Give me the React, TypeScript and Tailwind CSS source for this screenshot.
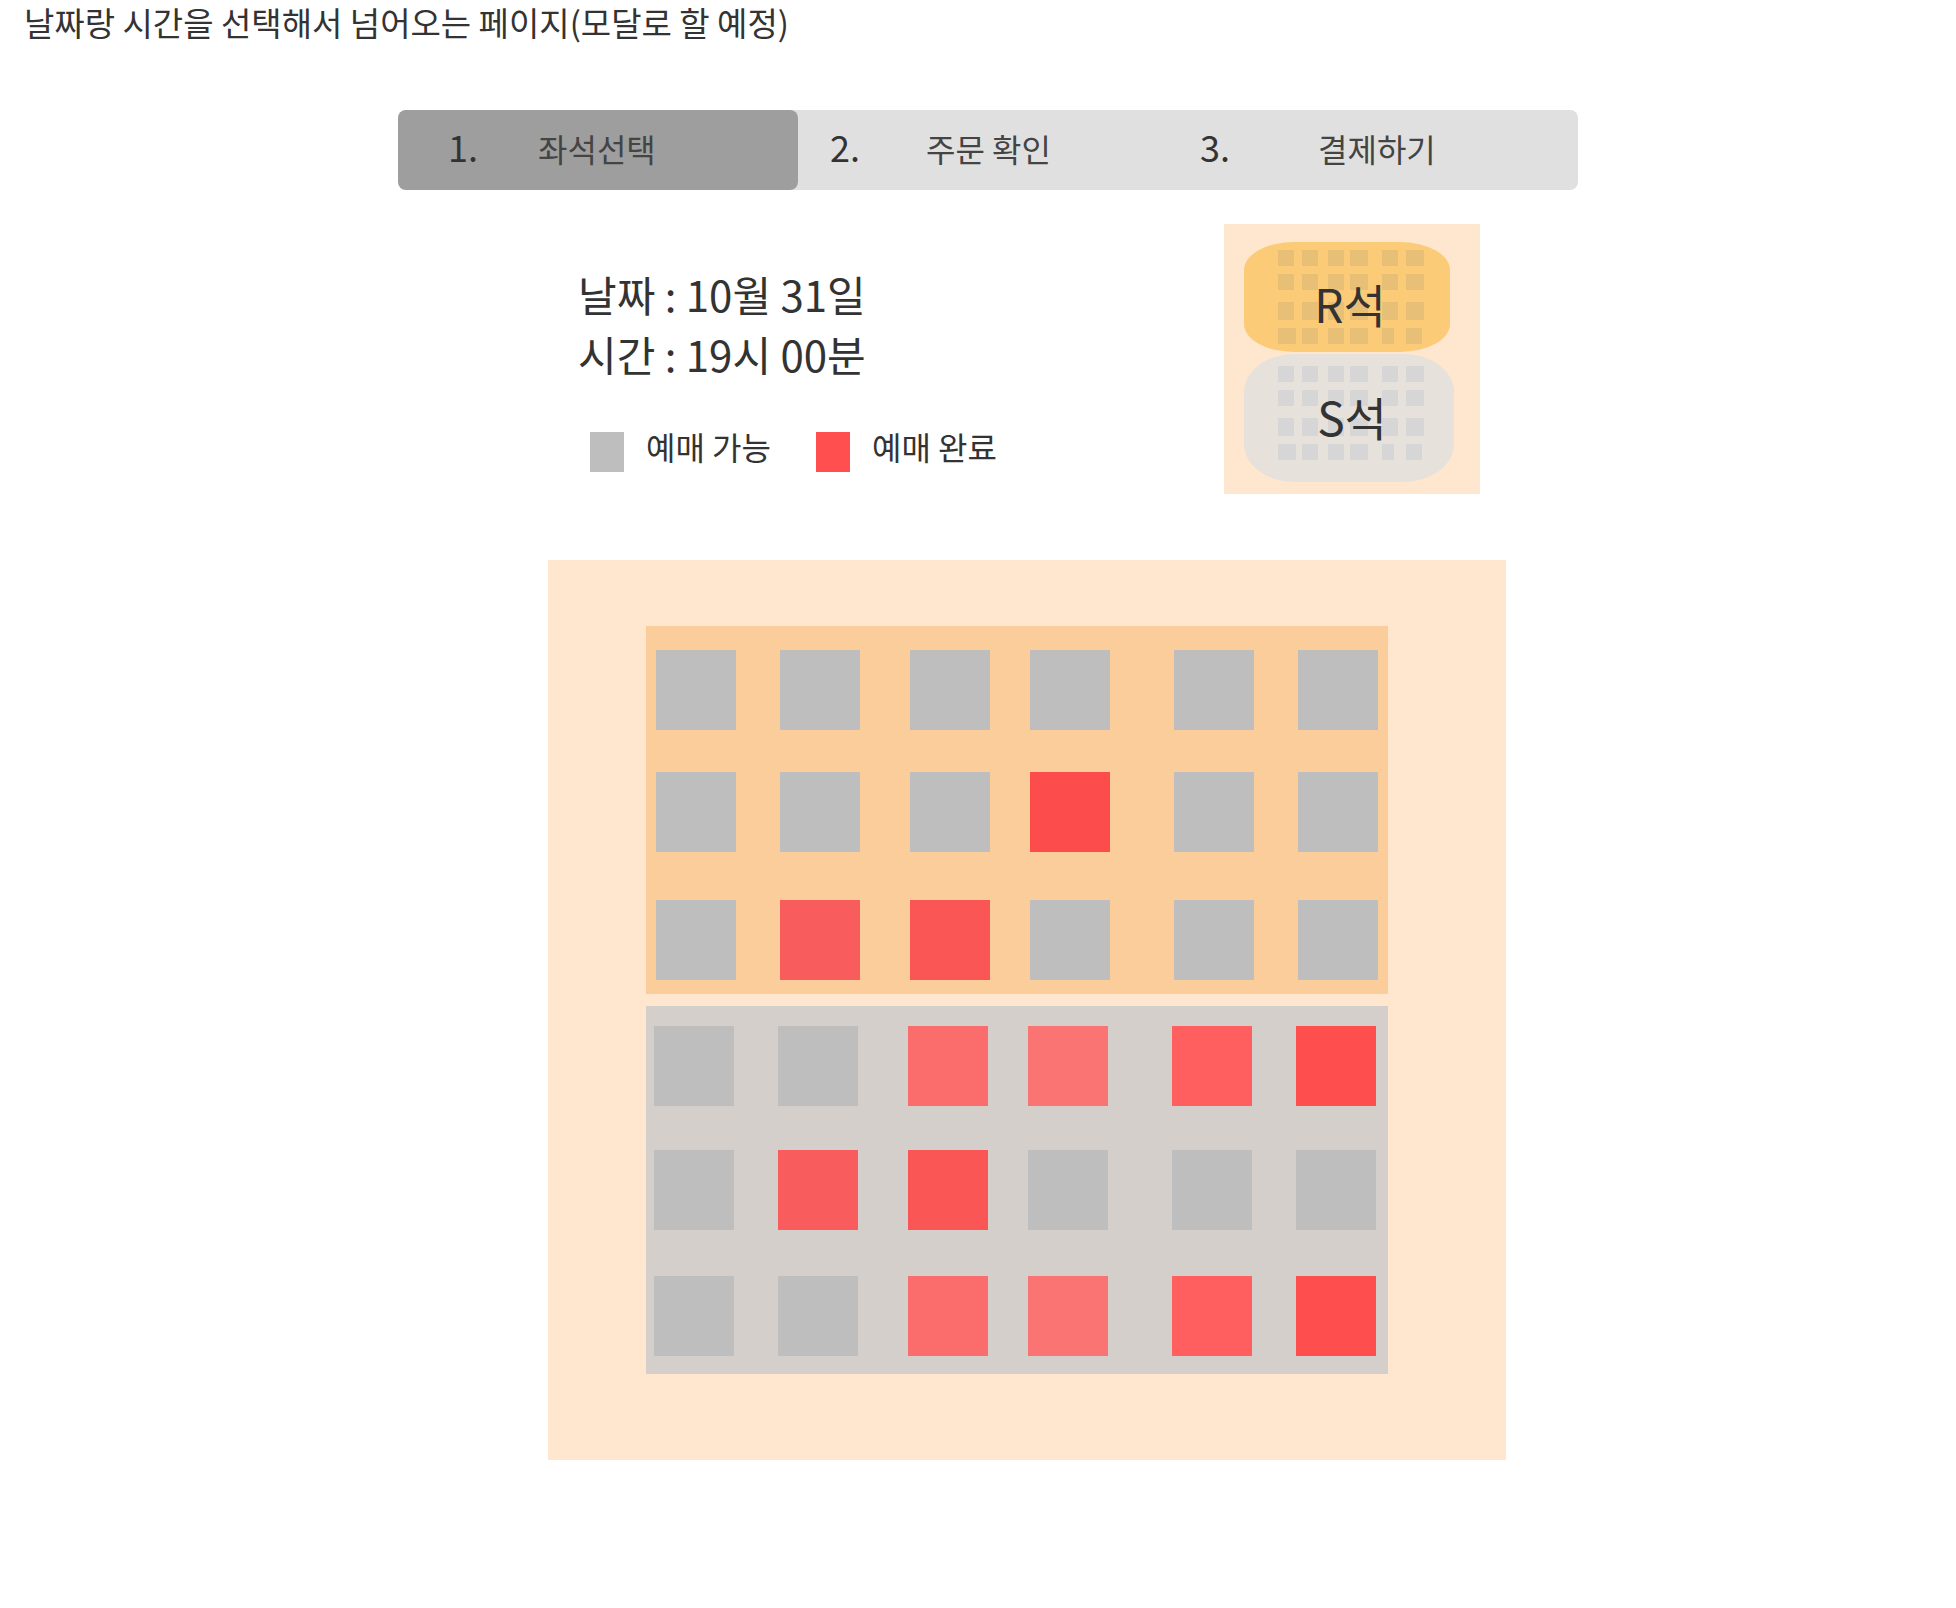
type Seat = { color: string; sold?: boolean };

const open: Seat = { color: "bg-[#bebebe]" };
const sold = (color: string): Seat => ({ color, sold: true });

const rRows: Seat[][] = [
  [open, open, open, open, open, open],
  [open, open, open, sold("bg-[#fc4c4c]"), open, open],
  [open, sold("bg-[#f95c5c]"), sold("bg-[#fb5656]"), open, open, open],
];

const fadedRow: Seat[] = [
  open,
  open,
  sold("bg-[#fb6d6d]"),
  sold("bg-[#fb7474]"),
  sold("bg-[#ff5f5f]"),
  sold("bg-[#ff4e4e]"),
];

const sRows: Seat[][] = [
  fadedRow,
  [open, sold("bg-[#f95c5c]"), sold("bg-[#fb5656]"), open, open, open],
  fadedRow,
];

const steps = [
  { no: "1.", label: "좌석선택", pad: "pl-[50px]", slot: "w-[90px]", active: true },
  { no: "2.", label: "주문 확인", pad: "pl-8", slot: "w-24", active: false },
  { no: "3.", label: "결제하기", pad: "pl-8", slot: "w-[118px]", active: false },
];

function Steps() {
  return (
    <nav aria-label="예매 단계" className="rounded-lg bg-[#e0e0e0]">
      <ol className="grid grid-cols-[400fr_370fr_410fr]">
        {steps.map((s) => (
          <li key={s.no}>
            <button
              type="button"
              aria-current={s.active ? "step" : undefined}
              className={`flex h-20 w-full items-center rounded-lg pb-1 text-left ${s.pad} ${s.active ? "bg-[#9e9e9e]" : ""}`}
            >
              <span className={`shrink-0 pb-1 text-[36px] leading-[44px] ${s.slot}`}>{s.no}</span>
              <span className="whitespace-nowrap text-[32px] leading-[44px] text-[#444]">{s.label}</span>
            </button>
          </li>
        ))}
      </ol>
    </nav>
  );
}

function Zone({ name, rows, className }: { name: string; rows: Seat[][]; className: string }) {
  return (
    <div
      role="group"
      aria-label={name}
      className={`grid w-[742px] grid-cols-[124px_130px_120px_144px_124px_80px] ${className}`}
    >
      {rows.flatMap((row, r) =>
        row.map((seat, c) => (
          <button
            key={`${r}-${c}`}
            type="button"
            disabled={seat.sold}
            aria-label={`${name} ${r + 1}열 ${c + 1}번`}
            className={`size-20 ${seat.color}`}
          />
        )),
      )}
    </div>
  );
}

const dotWidths = ["w-4", "w-4", "w-4", "w-[18px]", "w-4", "w-[18px]"];
const lastDotWidths = ["w-[18px]", "w-4", "w-4", "w-[18px]", "w-3", "w-4"];

function MiniZone({ label, className, dot, text }: { label: string; className: string; dot: string; text: string }) {
  return (
    <button type="button" className={`relative block pl-[34px] text-left ${className}`}>
      <span className="grid grid-cols-[24px_26px_22px_32px_24px_18px] grid-rows-[24px_28px_26px_16px]">
        {[0, 1, 2, 3].flatMap((r) =>
          (r === 3 ? lastDotWidths : dotWidths).map((w, c) => (
            <span key={`${r}-${c}`} className={`${w} ${r === 2 ? "h-[18px]" : "h-4"} ${dot}`} />
          )),
        )}
      </span>
      <span
        className={`absolute inset-0 flex items-center justify-center pl-1.5 text-[46px] leading-[48px] ${text}`}
      >
        {label}
      </span>
    </button>
  );
}

export default function App() {
  return (
    <div className="min-h-screen bg-white pb-24 pl-5 font-['Noto_Sans_CJK_KR',sans-serif] text-[#333]">
      <h1 className="pl-1 text-[33px] leading-[44px]">
        날짜랑 시간을 선택해서 넘어오는 페이지(모달로 할 예정)
      </h1>
      <main className="mx-auto mt-[66px] max-w-[1180px]">
        <Steps />

        <section className="mt-[34px] flex items-start justify-between pl-[180px] pr-[98px]">
          <div className="pt-10">
            <p className="text-[42px] leading-[60px]">날짜 : 10월 31일</p>
            <p className="text-[42px] leading-[60px]">시간 : 19시 00분</p>
            <ul className="mt-[42px] flex gap-[42px] pl-3 text-[32px] leading-[40px]">
              <li className="flex items-start gap-[22px]">
                <span className="mt-1.5 h-10 w-[34px] bg-[#bebebe]" />
                <span className="w-[128px] whitespace-nowrap">예매 가능</span>
              </li>
              <li className="flex items-start gap-[22px]">
                <span className="mt-1.5 h-10 w-[34px] bg-[#ff4f4f]" />
                <span className="w-[128px] whitespace-nowrap">예매 완료</span>
              </li>
            </ul>
          </div>

          <div className="h-[270px] w-64 bg-[#ffe6cf] pl-5 pt-[18px]">
            <MiniZone
              label="R석"
              className="h-[110px] w-[206px] rounded-[50px/28px] bg-[#fbcb77] pb-2 pt-2"
              dot="bg-[#e8bf77]"
              text="pt-3"
            />
            <MiniZone
              label="S석"
              className="mt-0.5 h-32 w-[210px] rounded-[50px/38px] bg-[#e6e1db] pb-[22px] pt-3"
              dot="bg-[#d6d6d6]"
              text="pb-1"
            />
          </div>
        </section>

        <section
          aria-label="좌석 배치도"
          className="ml-[150px] mr-[72px] mt-[66px] flex flex-col gap-3 bg-[#ffe6cf] pb-[86px] pl-[98px] pt-[66px]"
        >
          <Zone name="R석" rows={rRows} className="grid-rows-[122px_128px_80px] bg-[#fbcd9a] pb-[14px] pl-[10px] pt-6" />
          <Zone name="S석" rows={sRows} className="grid-rows-[124px_126px_80px] bg-[#d4cfca] pb-[18px] pl-2 pt-5" />
        </section>
      </main>
    </div>
  );
}
